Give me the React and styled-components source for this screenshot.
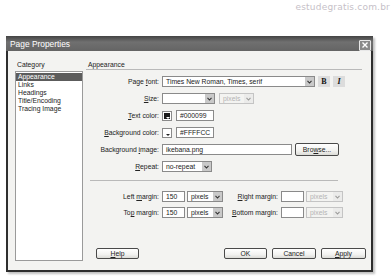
import React from 'react';
import styled, { createGlobalStyle } from 'styled-components';

const GlobalStyle = createGlobalStyle`
  body {
    margin: 0;
    background: #fff;
    font-family: "Liberation Sans", Arial, sans-serif;
  }
`;

const Page = styled.div`
  width: 392px;
  height: 278px;
  overflow: hidden;
`;

const Watermark = styled.div`
  height: 14px;
  padding-right: 2px;
  text-align: right;
  font-family: "DejaVu Sans", Verdana, sans-serif;
  font-size: 9px;
  line-height: 14px;
  letter-spacing: 0.2px;
  color: #c6bfc8;
`;

const Window = styled.div`
  margin: 22px 0 0 6px;
  width: 367px;
  height: 236px;
  box-sizing: border-box;
  border: 2px solid #2e2e2e;
  border-top: none;
  background: #f3f3f1;
  display: flex;
  flex-direction: column;
  box-shadow: 2px 2px 2px rgba(0, 0, 0, 0.25);
`;

const TitleBar = styled.div`
  height: 15px;
  margin: 0 -2px;
  padding: 0 2px 0 4px;
  display: flex;
  align-items: center;
  justify-content: space-between;
  background: linear-gradient(#444, #707070 40%, #646464);
  color: #fff;
  font-size: 8.4px;
`;

const CloseButton = styled.div`
  width: 10px;
  height: 9px;
  margin-top: 3px;
  border: 1px solid #e8e8e8;
  border-radius: 1px;
  background: #8a8a8a;
  display: flex;
  align-items: center;
  justify-content: center;
`;

const Body = styled.div`
  flex: 1;
  display: grid;
  grid-template-columns: 68px 1fr;
  column-gap: 3px;
  padding: 9px 5px 9px 7px;
  font-size: 6.8px;
  color: #222;
`;

const Column = styled.div`
  display: flex;
  flex-direction: column;
`;

const Heading = styled.div`
  height: 9px;
  line-height: 9px;
  padding-left: 2px;
`;

const CategoryList = styled.ul`
  flex: 1;
  list-style: none;
  margin: 2px 0 0;
  padding: 1px 0;
  background: #fff;
  border: 1px solid #9a9a9a;
`;

const CategoryItem = styled.li`
  height: 8px;
  line-height: 8px;
  padding-left: 2px;
  background: ${(p) => (p.$selected ? '#5c5c5c' : 'transparent')};
  color: ${(p) => (p.$selected ? '#fff' : '#222')};
`;

const Rule = styled.div`
  height: 0;
  border-top: 1px solid #b9b9b9;
  margin: ${(p) => p.$margin || '0'};
  width: ${(p) => p.$width || 'auto'};
`;

const FormGrid = styled.div`
  display: grid;
  grid-template-columns: 74px 1fr;
  column-gap: 2px;
  row-gap: 6px;
  grid-auto-rows: 11px;
  align-items: center;
  margin-top: 6px;
`;

const MarginGrid = styled.div`
  display: grid;
  grid-template-columns: 74px 23px 36px 54px 23px 37px;
  column-gap: 2px;
  row-gap: 5px;
  grid-auto-rows: 11px;
  align-items: center;
  margin-top: 10px;
`;

const Label = styled.label`
  text-align: right;
  padding-right: 1px;
  white-space: nowrap;
  color: #222;
`;

const Controls = styled.div`
  display: flex;
  align-items: center;
  gap: ${(p) => p.$gap || 2}px;
  height: 100%;
`;

const Field = styled.div`
  box-sizing: border-box;
  width: ${(p) => p.$width}px;
  height: ${(p) => p.$height || 11}px;
  padding-left: 3px;
  line-height: ${(p) => (p.$height || 11) - 2}px;
  border: 1px solid #8a8a8a;
  background: #fff;
  white-space: nowrap;
  overflow: hidden;
`;

const SelectBox = styled.div`
  box-sizing: border-box;
  width: ${(p) => p.$width}px;
  height: 11px;
  display: flex;
  border: 1px solid ${(p) => (p.$disabled ? '#c4c4c4' : '#8a8a8a')};
  background: ${(p) => (p.$disabled ? '#f3f3f1' : '#fff')};
  color: ${(p) => (p.$disabled ? '#b4b4b4' : '#222')};
`;

const SelectText = styled.span`
  flex: 1;
  padding-left: 3px;
  line-height: 9px;
  white-space: nowrap;
  overflow: hidden;
`;

const Arrow = styled.span`
  width: 9px;
  display: flex;
  align-items: center;
  justify-content: center;
  background: ${(p) => (p.$disabled ? '#e2e2e2' : '#c9c9c9')};
  opacity: ${(p) => (p.$disabled ? 0.45 : 1)};
`;

const Swatch = styled.div`
  position: relative;
  box-sizing: border-box;
  width: 10px;
  height: 10px;
  margin-right: 2px;
  border: 1px solid #8a8a8a;
  background: #fff;
  padding: 1px;
  &::before {
    content: '';
    display: block;
    width: 100%;
    height: 100%;
    background: ${(p) => p.$color};
  }
  &::after {
    content: '';
    position: absolute;
    right: 1px;
    bottom: 1px;
    border-left: 2px solid transparent;
    border-right: 2px solid transparent;
    border-top: 2px solid ${(p) => (p.$color === '#fff' ? '#222' : '#fff')};
  }
`;

const StyleToggle = styled.div`
  width: 12px;
  height: 11px;
  margin-left: 1px;
  background: #dcdcdc;
  display: flex;
  align-items: center;
  justify-content: center;
  font-family: "Liberation Serif", "Times New Roman", serif;
  font-weight: bold;
  font-style: ${(p) => (p.$italic ? 'italic' : 'normal')};
  font-size: 8px;
  color: #111;
`;

const Button = styled.div`
  box-sizing: border-box;
  width: ${(p) => p.$width || 44}px;
  height: ${(p) => p.$height || 11}px;
  border: 1px solid #4a4a4a;
  border-radius: 2px;
  background: linear-gradient(#ffffff, #f2f2f0 60%, #dcdcd8);
  display: flex;
  align-items: center;
  justify-content: center;
  color: #222;
`;

const ButtonRow = styled.div`
  margin-top: auto;
  margin-bottom: 2px;
  display: flex;
  align-items: center;
  gap: 5px;
  padding-left: 10px;
`;

const Spacer = styled.div`
  flex: 1;
`;

const Chevron = () => (
  <svg width="5" height="4" viewBox="0 0 5 4">
    <path d="M0.5 0.8 L2.5 3 L4.5 0.8" fill="none" stroke="#333" strokeWidth="1.1" />
  </svg>
);

const Select = ({ width, disabled, children }) => (
  <SelectBox $width={width} $disabled={disabled}>
    <SelectText>{children}</SelectText>
    <Arrow $disabled={disabled}><Chevron /></Arrow>
  </SelectBox>
);

const categories = ['Appearance', 'Links', 'Headings', 'Title/Encoding', 'Tracing Image'];

export default function App() {
  return (
    <Page>
      <GlobalStyle />
      <Watermark>estudegratis.com.br</Watermark>
      <Window>
        <TitleBar>
          <span>Page Properties</span>
          <CloseButton>
            <svg width="6" height="6" viewBox="0 0 6 6">
              <path d="M0.5 0.5 L5.5 5.5 M5.5 0.5 L0.5 5.5" stroke="#fff" strokeWidth="1.4" />
            </svg>
          </CloseButton>
        </TitleBar>
        <Body>
          <Column>
            <Heading>Category</Heading>
            <CategoryList>
              {categories.map((c, i) => (
                <CategoryItem key={c} $selected={i === 0}>{c}</CategoryItem>
              ))}
            </CategoryList>
          </Column>
          <Column>
            <Heading>Appearance</Heading>
            <Rule $margin="0 4px 0 0" />
            <FormGrid>
              <Label>Page <u>f</u>ont:</Label>
              <Controls>
                <Select width={153}>Times New Roman, Times, serif</Select>
                <StyleToggle>B</StyleToggle>
                <StyleToggle $italic>I</StyleToggle>
              </Controls>

              <Label><u>S</u>ize:</Label>
              <Controls $gap={4}>
                <Select width={53} />
                <Select width={35} disabled>pixels</Select>
              </Controls>

              <Label><u>T</u>ext color:</Label>
              <Controls>
                <Swatch $color="#1a1a1a" />
                <Field $width={38}>#000099</Field>
              </Controls>

              <Label><u>B</u>ackground color:</Label>
              <Controls>
                <Swatch $color="#fff" />
                <Field $width={38}>#FFFFCC</Field>
              </Controls>

              <Label>Background <u>i</u>mage:</Label>
              <Controls $gap={3}>
                <Field $width={130}>ikebana.png</Field>
                <Button $width={44} $height={13}>Bro<u>w</u>se...</Button>
              </Controls>

              <Label><u>R</u>epeat:</Label>
              <Controls>
                <Select width={50}>no-repeat</Select>
              </Controls>
            </FormGrid>
            <Rule $margin="8px 0 0 4px" $width="248px" />
            <MarginGrid>
              <Label>Left <u>m</u>argin:</Label>
              <Field $width={23}>150</Field>
              <Select width={36}>pixels</Select>
              <Label><u>R</u>ight margin:</Label>
              <Field $width={23} />
              <Select width={37} disabled>pixels</Select>

              <Label>To<u>p</u> margin:</Label>
              <Field $width={23}>150</Field>
              <Select width={36}>pixels</Select>
              <Label><u>B</u>ottom margin:</Label>
              <Field $width={23} />
              <Select width={37} disabled>pixels</Select>
            </MarginGrid>
            <ButtonRow>
              <Button $width={43}><u>H</u>elp</Button>
              <Spacer />
              <Button $width={43}>OK</Button>
              <Button $width={44}>Cancel</Button>
              <Button $width={45}><u>A</u>pply</Button>
            </ButtonRow>
          </Column>
        </Body>
      </Window>
    </Page>
  );
}
